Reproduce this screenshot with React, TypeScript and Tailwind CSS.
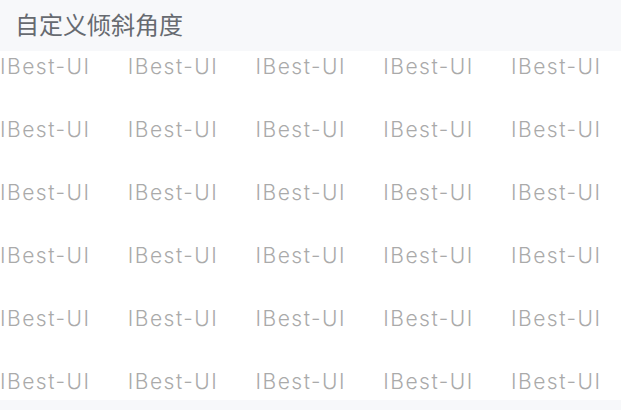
import React from "react";

const rows = [0, 1, 2, 3, 4, 5];
const cols = [0, 1, 2, 3, 4];

export default function App() {
  return (
    <div
      className="w-[621px] h-[410px] bg-[#f7f8fa] overflow-hidden"
      style={{ fontFamily: 'Inter, "Noto Sans CJK SC", sans-serif' }}
    >
      <div className="h-[51px] flex items-center pl-[15px] text-[24px] text-[#666a70]">
        自定义倾斜角度
      </div>
      <div className="h-[349px] bg-white overflow-hidden pt-px">
        {rows.map((r) => (
          <div key={r} className="flex h-[63px] items-start whitespace-nowrap">
            {cols.map((c) => (
              <div
                key={c}
                className="w-[127.75px] shrink-0 text-[21px] font-light leading-[30px] tracking-[1.5px] text-[#aaaaaa]"
              >
                IBest-UI
              </div>
            ))}
          </div>
        ))}
      </div>
    </div>
  );
}
